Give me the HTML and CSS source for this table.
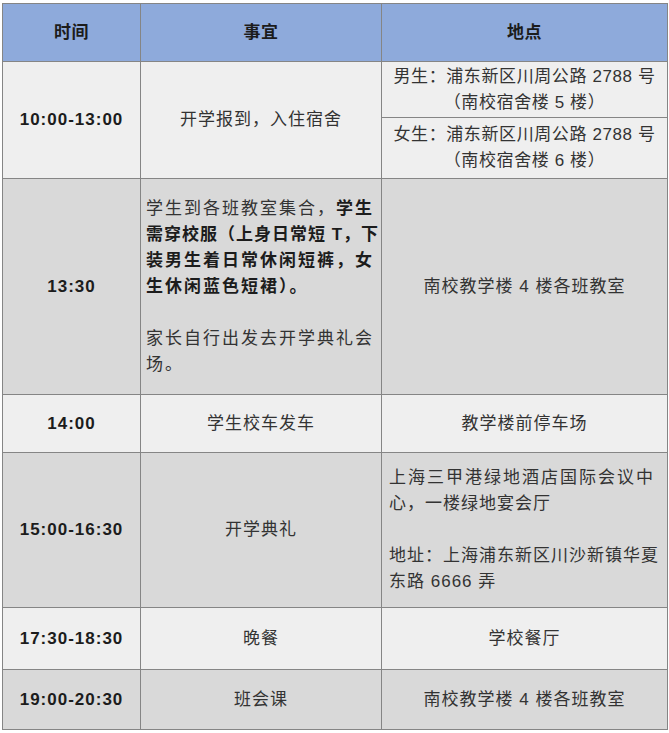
FILE: index.html
```html
<!DOCTYPE html>
<html lang="zh">
<head>
<meta charset="utf-8">
<title>开学日程</title>
<link rel="stylesheet" href="styles.css">
</head>
<body>
<table class="schedule">
  <colgroup>
    <col class="c-time">
    <col class="c-item">
    <col class="c-place">
  </colgroup>
  <thead>
    <tr class="r-head">
      <th>时间</th>
      <th>事宜</th>
      <th>地点</th>
    </tr>
  </thead>
  <tbody>
    <tr class="r-1a light">
      <td class="time" rowspan="2">10:00-13:00</td>
      <td class="item" rowspan="2">开学报到，入住宿舍</td>
      <td class="place tight">男生：浦东新区川周公路 2788 号<br>（南校宿舍楼 5 楼）</td>
    </tr>
    <tr class="r-1b light">
      <td class="place tight">女生：浦东新区川周公路 2788 号<br>（南校宿舍楼 6 楼）</td>
    </tr>
    <tr class="r-2 gray">
      <td class="time">13:30</td>
      <td class="item left pad-bottom">
        <span class="ln ls2">学生到各班教室集合，<b>学生</b></span>
        <b class="ln ls1">需穿校服（上身日常短 T，下</b>
        <b class="ln ls2">装男生着日常休闲短裤，女</b>
        <b class="ln ls2">生休闲蓝色短裙）。</b>
        <span class="ln gap"></span>
        <span class="ln ls2">家长自行出发去开学典礼会</span>
        <span class="ln ls2">场。</span>
      </td>
      <td class="place">南校教学楼 4 楼各班教室</td>
    </tr>
    <tr class="r-3 light">
      <td class="time">14:00</td>
      <td class="item">学生校车发车</td>
      <td class="place">教学楼前停车场</td>
    </tr>
    <tr class="r-4 gray">
      <td class="time">15:00-16:30</td>
      <td class="place-cell left-cell">
        <span class="ln center">开学典礼</span>
      </td>
      <td class="place left">
        <span class="ln ls2">上海三甲港绿地酒店国际会议中</span>
        <span class="ln ls1">心，一楼绿地宴会厅</span>
        <span class="ln gap"></span>
        <span class="ln ls1">地址：上海浦东新区川沙新镇华夏</span>
        <span class="ln ls1">东路 6666 弄</span>
      </td>
    </tr>
    <tr class="r-5 light">
      <td class="time">17:30-18:30</td>
      <td class="item">晚餐</td>
      <td class="place">学校餐厅</td>
    </tr>
    <tr class="r-6 gray">
      <td class="time">19:00-20:30</td>
      <td class="item">班会课</td>
      <td class="place">南校教学楼 4 楼各班教室</td>
    </tr>
  </tbody>
</table>
</body>
</html>
```

FILE: styles.css
```css
html, body {
  margin: 0;
  background: #ffffff;
}
body {
  padding: 3px 0 0 2px;
  font-family: "Liberation Sans", "Noto Sans CJK SC", sans-serif;
  color: #333333;
}
.schedule {
  border-collapse: collapse;
  table-layout: fixed;
  width: 665px;
  font-size: 17px;
  line-height: 26px;
}
.c-time { width: 138px; }
.c-item { width: 241px; }
.c-place { width: 286px; }

.schedule th,
.schedule td {
  border: 1px solid #858585;
  padding: 0 6px;
  text-align: center;
  vertical-align: middle;
  letter-spacing: 1px;
}
.schedule th {
  background: #8eaadb;
  color: #1c1c1c;
  font-weight: bold;
  letter-spacing: 0.5px;
}
.light td { background: #efefef; }
.gray td { background: #d9d9d9; }

.time {
  font-weight: bold;
  color: #1c1c1c;
  letter-spacing: 0.2px;
}
.left { text-align: left !important; }
.tight { letter-spacing: 0.6px !important; }
.place.left { padding-left: 7px; padding-right: 2px; }
.item.left { padding-left: 5px; padding-right: 2px; }
.pad-bottom { padding-bottom: 26px; }

.ln {
  display: block;
  white-space: nowrap;
  height: 26px;
}
.ln.gap { height: 26px; }
.ls1 { letter-spacing: 1px; }
.ls2 { letter-spacing: 2px; }
.center { text-align: center; }
.item b, b.ln { color: #1c1c1c; font-weight: bold; }

.r-head { height: 58px; }
.r-1a { height: 56px; }
.r-1b { height: 61px; }
.r-2 { height: 216px; }
.r-3 { height: 58px; }
.r-4 { height: 155px; }
.r-5 { height: 62px; }
.r-6 { height: 60px; }
```
